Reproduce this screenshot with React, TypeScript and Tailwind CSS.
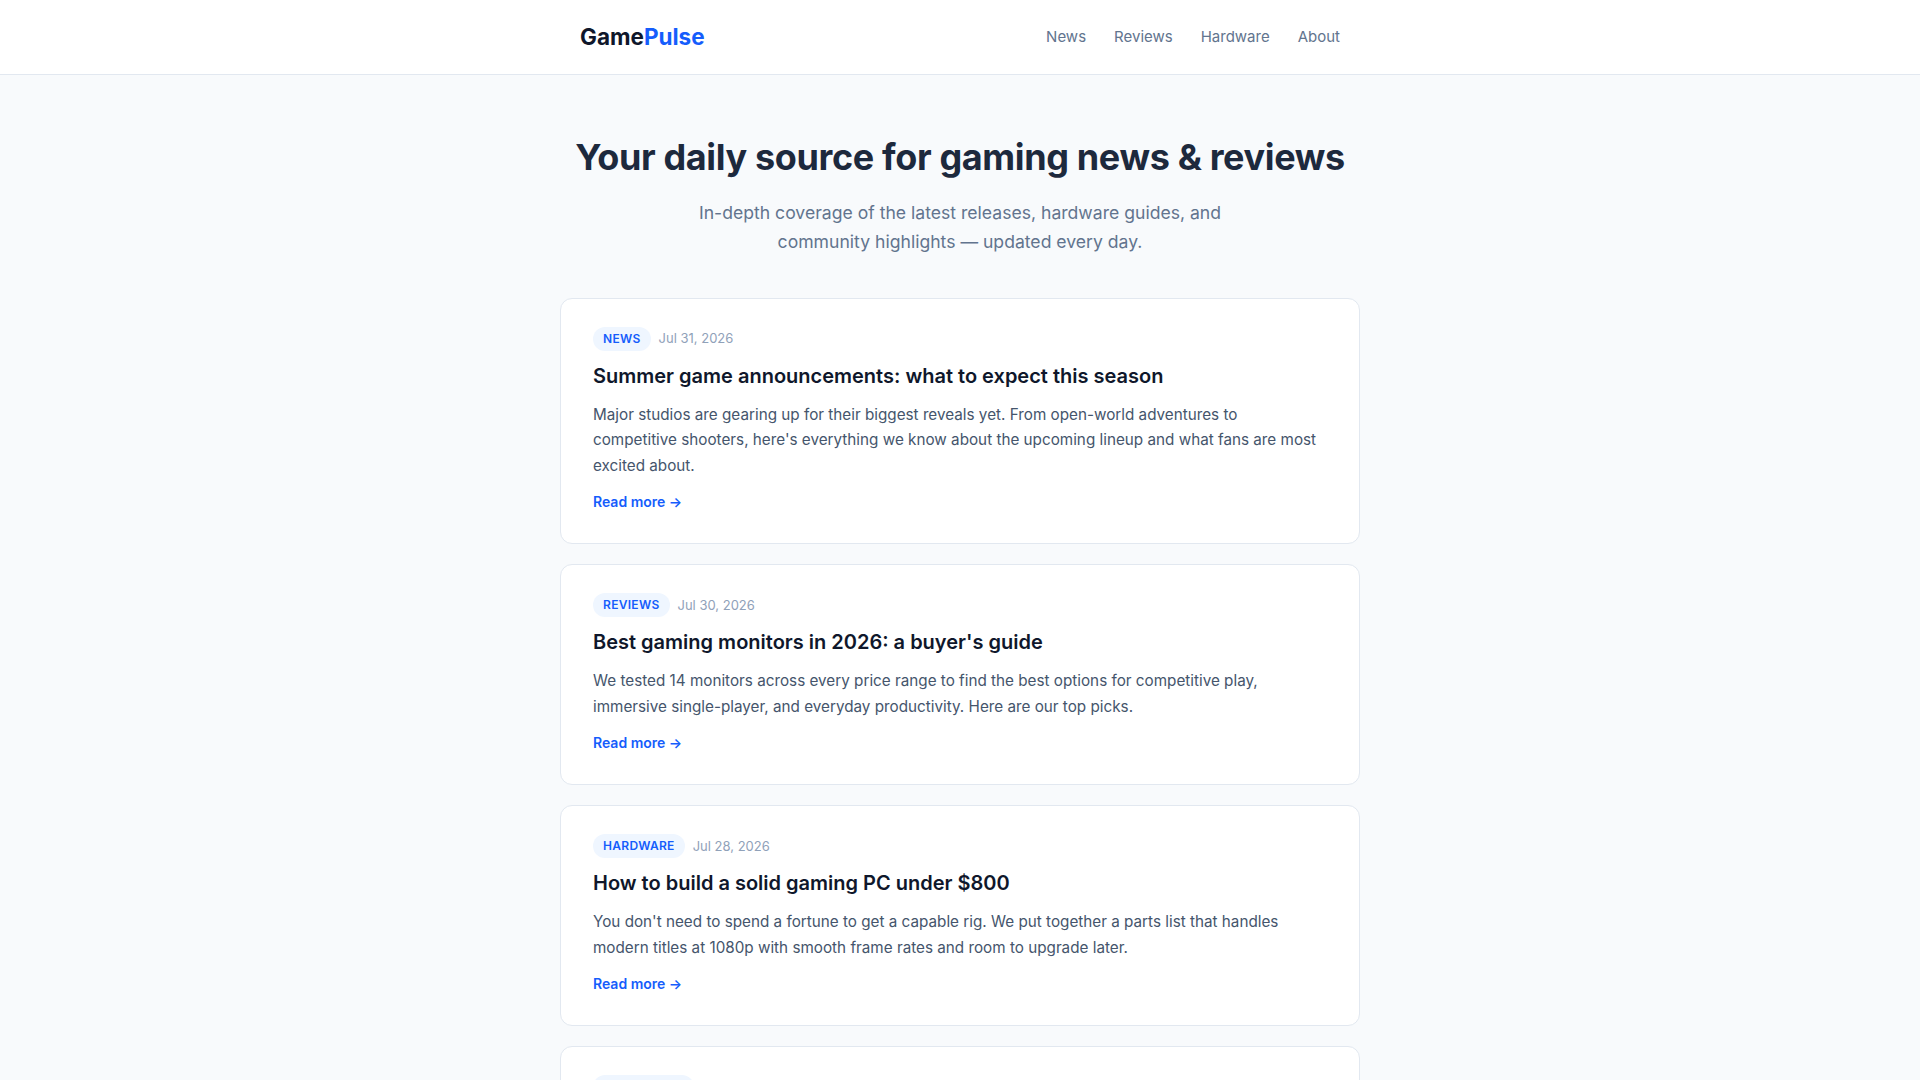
import React from 'react';

interface Post {
  id: number;
  category: string;
  date: string;
  title: string;
  excerpt: string;
}

const posts: Post[] = [
  {
    id: 1,
    category: 'News',
    date: 'Jul 31, 2026',
    title: 'Summer game announcements: what to expect this season',
    excerpt:
      "Major studios are gearing up for their biggest reveals yet. From open-world adventures to competitive shooters, here's everything we know about the upcoming lineup and what fans are most excited about.",
  },
  {
    id: 2,
    category: 'Reviews',
    date: 'Jul 30, 2026',
    title: "Best gaming monitors in 2026: a buyer's guide",
    excerpt:
      'We tested 14 monitors across every price range to find the best options for competitive play, immersive single-player, and everyday productivity. Here are our top picks.',
  },
  {
    id: 3,
    category: 'Hardware',
    date: 'Jul 28, 2026',
    title: 'How to build a solid gaming PC under $800',
    excerpt:
      "You don't need to spend a fortune to get a capable rig. We put together a parts list that handles modern titles at 1080p with smooth frame rates and room to upgrade later.",
  },
  {
    id: 4,
    category: 'Community',
    date: 'Jul 25, 2026',
    title: 'Community spotlight: the best fan creations of the month',
    excerpt:
      'From stunning mods to speedrun records, our readers have been busy. Here are the standout projects that caught our eye this month.',
  },
];

const navItems = ['News', 'Reviews', 'Hardware', 'About'];

const PostCard: React.FC<{ post: Post }> = ({ post }) => (
  <article className="bg-white border border-slate-200 rounded-xl px-8 pt-7 pb-[29px]">
    <div className="flex items-center gap-2">
      <span className="inline-flex items-center h-6 px-2.5 rounded-full bg-blue-50 text-blue-600 text-xs font-semibold uppercase tracking-wide">
        {post.category}
      </span>
      <span className="text-[13px] text-slate-400">{post.date}</span>
    </div>
    <h2 className="mt-[11px] text-xl leading-7 font-semibold text-slate-900">{post.title}</h2>
    <p className="mt-3 max-w-[728px] text-[15.25px] leading-[25.5px] text-slate-600">{post.excerpt}</p>
    <a href="#" className="mt-3 block text-sm leading-6 font-semibold text-blue-600">
      Read more →
    </a>
  </article>
);

export default function App() {
  return (
    <div className="min-h-screen bg-slate-50 font-['Inter',sans-serif]">
      {/* Header */}
      <header className="bg-white border-b border-slate-200">
        <div className="max-w-[800px] mx-auto px-5 h-[74px] flex items-center justify-between">
          <a href="#" className="text-[22.5px] font-bold text-slate-900">
            Game<span className="text-blue-600">Pulse</span>
          </a>
          <nav className="flex items-center gap-7">
            {navItems.map((item) => (
              <a key={item} href="#" className="text-[15px] text-slate-500">
                {item}
              </a>
            ))}
          </nav>
        </div>
      </header>

      {/* Hero */}
      <section className="pt-[62px] pb-[41px] text-center">
        <h1 className="text-4xl font-bold tracking-[-0.01em] text-slate-800">
          Your daily source for gaming news &amp; reviews
        </h1>
        <p className="mt-[21px] mx-auto max-w-xl text-[17.6px] leading-[29.4px] text-slate-500">
          In-depth coverage of the latest releases, hardware guides, and community highlights — updated every day.
        </p>
      </section>

      {/* Posts */}
      <main className="max-w-[800px] mx-auto flex flex-col gap-5 pb-16">
        {posts.map((post) => (
          <PostCard key={post.id} post={post} />
        ))}
      </main>
    </div>
  );
}
